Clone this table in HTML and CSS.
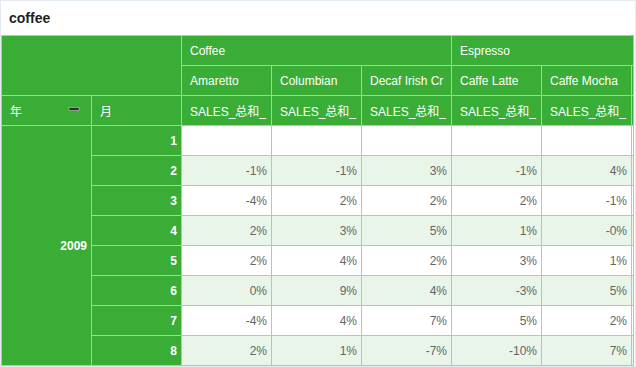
FILE: index.html
```html
<!DOCTYPE html>
<html>
<head>
<meta charset="utf-8">
<link rel="stylesheet" href="styles.css">
</head>
<body>
<div class="frame">
  <div class="title">coffee</div>
  <div class="wrap">
    <div class="grid">
      <div class="c h corner"></div>
      <div class="c h span3"><div class="t">Coffee</div></div>
      <div class="c h span3"><div class="t">Espresso</div></div>

      <div class="c h"><div class="t">Amaretto</div></div>
      <div class="c h"><div class="t">Columbian</div></div>
      <div class="c h"><div class="t">Decaf Irish Cr</div></div>
      <div class="c h"><div class="t">Caffe Latte</div></div>
      <div class="c h"><div class="t">Caffe Mocha</div></div>
      <div class="c h"></div>

      <div class="c h year-h"><div class="t">年</div><svg class="minus" width="12" height="6" viewBox="0 0 12 6"><rect x="1" y="1.5" width="10" height="3" fill="#2e2e2e" stroke="rgba(210,210,210,0.55)" stroke-width="1"/></svg></div>
      <div class="c h"><div class="t">月</div></div>
      <div class="c h"><div class="t">SALES_总和_</div></div>
      <div class="c h"><div class="t">SALES_总和_</div></div>
      <div class="c h"><div class="t">SALES_总和_</div></div>
      <div class="c h"><div class="t">SALES_总和_</div></div>
      <div class="c h"><div class="t">SALES_总和_</div></div>
      <div class="c h"></div>

      <div class="c h year">2009</div>

      <div class="c h m">1</div>
      <div class="c d"></div><div class="c d"></div><div class="c d"></div><div class="c d"></div><div class="c d"></div><div class="c d"></div>

      <div class="c h m">2</div>
      <div class="c d alt">-1%</div><div class="c d alt">-1%</div><div class="c d alt">3%</div><div class="c d alt">-1%</div><div class="c d alt">4%</div><div class="c d alt"></div>

      <div class="c h m">3</div>
      <div class="c d">-4%</div><div class="c d">2%</div><div class="c d">2%</div><div class="c d">2%</div><div class="c d">-1%</div><div class="c d"></div>

      <div class="c h m">4</div>
      <div class="c d alt">2%</div><div class="c d alt">3%</div><div class="c d alt">5%</div><div class="c d alt">1%</div><div class="c d alt">-0%</div><div class="c d alt"></div>

      <div class="c h m">5</div>
      <div class="c d">2%</div><div class="c d">4%</div><div class="c d">2%</div><div class="c d">3%</div><div class="c d">1%</div><div class="c d"></div>

      <div class="c h m">6</div>
      <div class="c d alt">0%</div><div class="c d alt">9%</div><div class="c d alt">4%</div><div class="c d alt">-3%</div><div class="c d alt">5%</div><div class="c d alt"></div>

      <div class="c h m">7</div>
      <div class="c d">-4%</div><div class="c d">4%</div><div class="c d">7%</div><div class="c d">5%</div><div class="c d">2%</div><div class="c d"></div>

      <div class="c h m">8</div>
      <div class="c d alt">2%</div><div class="c d alt">1%</div><div class="c d alt">-7%</div><div class="c d alt">-10%</div><div class="c d alt">7%</div><div class="c d alt"></div>
    </div>
  </div>
</div>
</body>
</html>
```

FILE: styles.css
```css
html, body {
  margin: 0;
  padding: 0;
  background: #ffffff;
}

.frame {
  width: 636px;
  height: 367px;
  box-sizing: border-box;
  border: 1px solid #e3eaf2;
  background: #ffffff;
  font-family: "Liberation Sans", Arial, "Noto Sans CJK SC", sans-serif;
  overflow: hidden;
}

.title {
  height: 34px;
  padding-left: 8px;
  display: flex;
  align-items: center;
  font-size: 14px;
  font-weight: bold;
  color: #1f1f1f;
}

.wrap {
  width: 633px;
  height: 331px;
  box-sizing: border-box;
  border-right: 1px solid #a4d49a;
  overflow: hidden;
}

.grid {
  display: grid;
  grid-template-columns: repeat(8, 89px);
  grid-auto-rows: 29px;
  gap: 1px;
  padding: 1px 0 1px 1px;
  width: max-content;
  background: #a4d49a;
}

.c {
  display: flex;
  align-items: center;
  font-size: 12px;
  padding: 0 4px 0 8px;
  min-width: 0;
  white-space: nowrap;
}

.t {
  white-space: nowrap;
}

.h {
  background: #3aad37;
  color: #ffffff;
}

.corner {
  grid-column: span 2;
  grid-row: span 2;
}

.span3 {
  grid-column: span 3;
}

.year-h {
  justify-content: space-between;
  padding-right: 11px;
}

.minus {
  display: block;
  flex: none;
  margin-top: -4px;
}

.year {
  grid-column: 1;
  grid-row: span 8;
  justify-content: flex-end;
  font-weight: bold;
}

.m {
  justify-content: flex-end;
  font-weight: bold;
}

.d {
  background: #ffffff;
  color: #666666;
  justify-content: flex-end;
}

.d.alt {
  background: #e8f5e8;
}
```
